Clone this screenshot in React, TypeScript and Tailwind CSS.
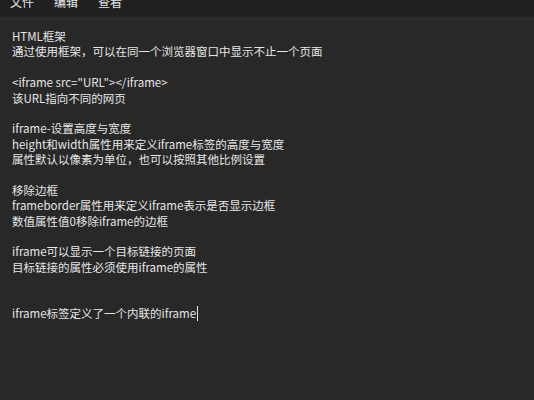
const lines = [
  "HTML框架",
  "通过使用框架，可以在同一个浏览器窗口中显示不止一个页面",
  "",
  '<iframe src="URL"></iframe>',
  "该URL指向不同的网页",
  "",
  "iframe-设置高度与宽度",
  "height和width属性用来定义iframe标签的高度与宽度",
  "属性默认以像素为单位，也可以按照其他比例设置",
  "",
  "移除边框",
  "frameborder属性用来定义iframe表示是否显示边框",
  "数值属性值0移除iframe的边框",
  "",
  "iframe可以显示一个目标链接的页面",
  "目标链接的属性必须使用iframe的属性",
  "",
  "",
];

export default function App() {
  return (
    <div className="flex flex-col w-[534px] h-[400px] overflow-hidden bg-[#282828] text-[#e6e6e6] font-['Noto_Sans_CJK_SC',sans-serif]">
      {/* 菜单栏 */}
      <div className="h-[17px] flex-shrink-0 bg-[#202020] overflow-hidden">
        <div className="flex gap-[20px] pl-[10px] -mt-[7px] text-[12px] leading-[18px] text-[#e6e6e6]">
          <span>文件</span>
          <span>编辑</span>
          <span>查看</span>
        </div>
      </div>
      <div className="h-[4px] flex-shrink-0 bg-[#2c2c2c]" />

      {/* 编辑区 */}
      <div className="flex-1 pl-[12px] pt-[8px] text-[11.5px] leading-[15.4px] whitespace-pre">
        {lines.map((line, i) => (
          <div key={i} className="h-[15.4px]">
            {line}
          </div>
        ))}
        <div className="h-[15.4px] flex items-center">
          <span>iframe标签定义了一个内联的iframe</span>
          <span className="w-px h-[15px] bg-[#e6e6e6] ml-px" />
        </div>
      </div>
    </div>
  );
}
